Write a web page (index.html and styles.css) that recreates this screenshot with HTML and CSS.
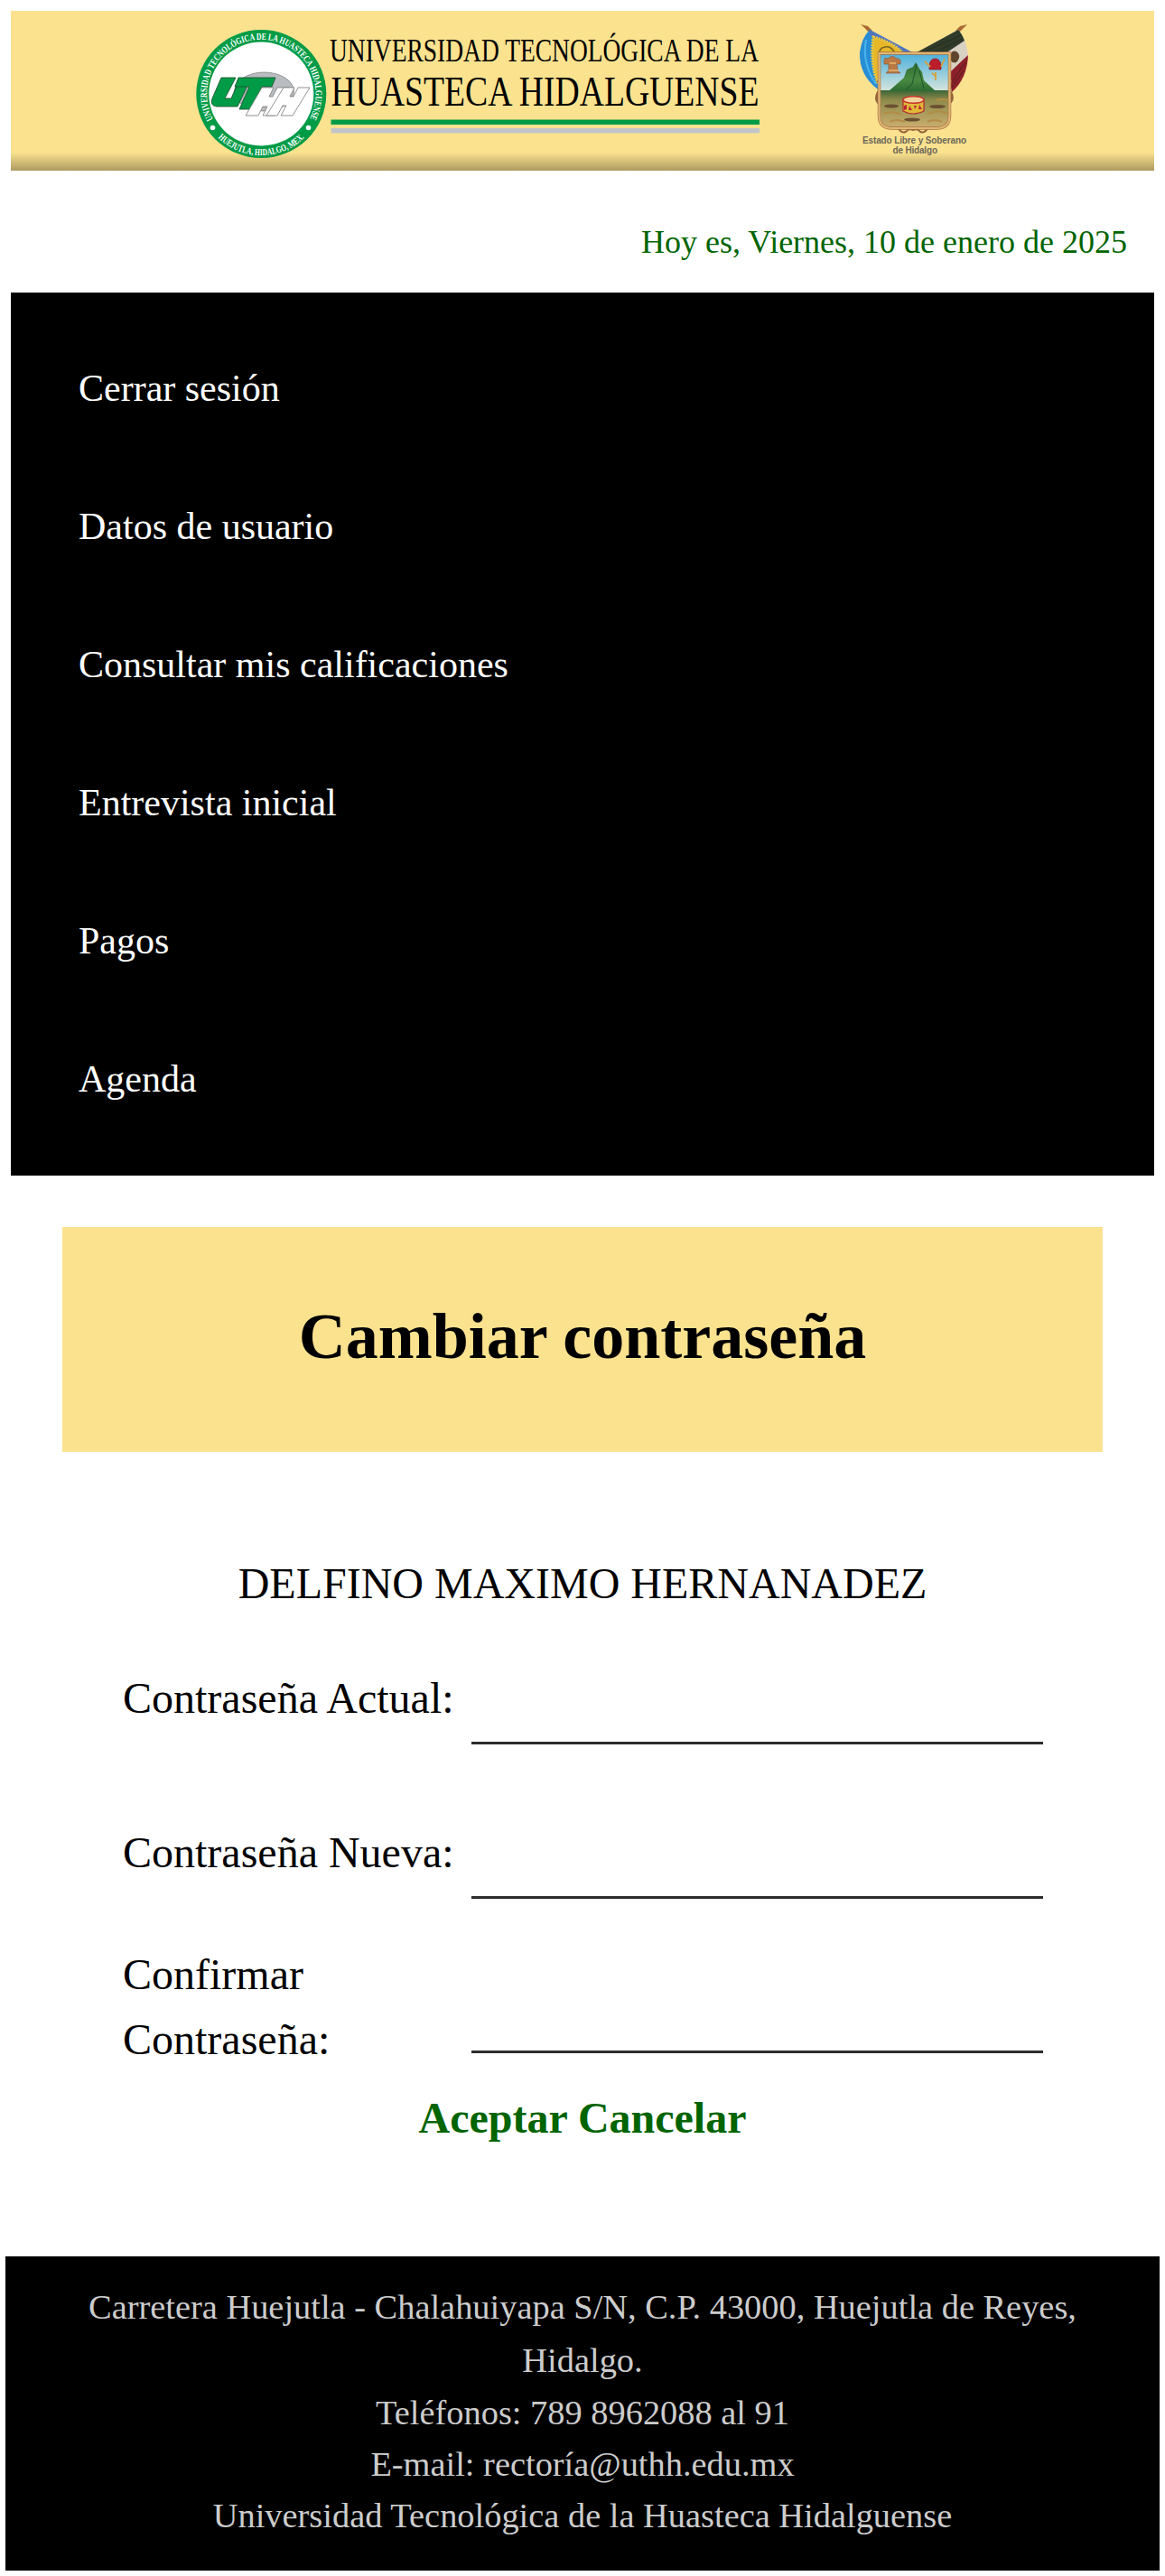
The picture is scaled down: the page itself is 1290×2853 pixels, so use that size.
FILE: index.html
```html
<!DOCTYPE html>
<html lang="es">
<head>
<meta charset="utf-8">
<title>Cambiar contraseña</title>
<link rel="stylesheet" href="styles.css">
</head>
<body>
<header class="banner">
<svg class="banner-art" viewBox="12 12 1266 177" role="img" aria-label="Universidad Tecnológica de la Huasteca Hidalguense">
<defs>
<path id="arc-top" d="M236 132A60.200 60.200 0 1 1 342.600 132"/>
<path id="arc-bottom" d="M240 151A68.200 68.200 0 0 0 338.600 151"/>
<linearGradient id="sky" x2="0" y2="1"><stop stop-color="#4bb0dc"/><stop offset=".5" stop-color="#d4e4dd"/></linearGradient>
<linearGradient id="ground" x2="0" y2="1"><stop stop-color="#3b6537"/><stop offset=".25" stop-color="#8e8a4b"/><stop offset="1" stop-color="#cdb071"/></linearGradient>
<linearGradient id="hill" x2="0" y2="1"><stop stop-color="#2f6b35"/><stop offset=".6" stop-color="#498b42"/><stop offset="1" stop-color="#2d6a31"/></linearGradient>
<clipPath id="shield-clip"><path d="M975 60H1050V128Q1050 141 1036 141H989Q975 141 975 128Z"/></clipPath>
</defs>
<g class="seal">
<ellipse cx="289.300" cy="104" rx="72" ry="71" fill="#009b46"/>
<ellipse cx="289.300" cy="104" rx="58" ry="57.500" fill="#fff"/>
<text class="seal-text"><textPath href="#arc-top" textLength="246" lengthAdjust="spacingAndGlyphs">UNIVERSIDAD TECNOLÓGICA DE LA HUASTECA HIDALGUENSE</textPath></text>
<text class="seal-text"><textPath href="#arc-bottom" startOffset="2" textLength="106" lengthAdjust="spacingAndGlyphs">HUEJUTLA, HIDALGO, MEX.</textPath></text>
<circle cx="235.500" cy="141.500" r="2.800" fill="#fff"/><circle cx="341.500" cy="141.500" r="2.800" fill="#fff"/>
<ellipse cx="292.500" cy="101.500" rx="33" ry="21.500" fill="#b9bcc0" stroke="#777" stroke-width=".7"/>
<g fill="#009b46" stroke="#174c2b" stroke-width=".8" stroke-linejoin="round">
<path d="M261 95H259L251 109H249L250 95Z" fill="#fff" stroke="none"/>
<path d="M245 86H261L249 109H256L262 95H274L263 118H240Q232 117 235 109Z"/>
<path d="M264 86H305L301 96H290L278 121H265L276 96H260Z"/>
</g>
<g fill="#fff" stroke="#777" stroke-width=".8" stroke-linejoin="round">
<path d="M290 97H303L298 107H302L307 97H320L304 128H291L296 118H291L286 128H272Z"/>
<path d="M314 97H326L321 107H325L330 97H343L324 128H311L317 117H313L307 128H295Z"/>
</g>
</g>
<text class="name-small" x="365" y="67.500" textLength="475" lengthAdjust="spacingAndGlyphs">UNIVERSIDAD TECNOLÓGICA DE LA</text>
<text class="name-large" x="366.500" y="117" textLength="474" lengthAdjust="spacingAndGlyphs">HUASTECA HIDALGUENSE</text>
<path d="M366.500 132.500H841V138H366.500Z" fill="#009b46"/>
<path d="M366.500 142H841V147.500H366.500Z" fill="#c4c5c9"/>
<g class="emblem">
<path d="M953 27L961 29L966 34L962 36Q957 30 953 27ZM1071 27L1063 29L1058 34L1062 36Q1067 31 1071 27Z" fill="#a96a32"/>
<path d="M963 33L1012 59L972 99Q951 83 952 58Q954 42 963 33Z" fill="#278ed6"/>
<path d="M963 33L1012 59H1000L963 39Z" fill="#5374be"/>
<path d="M959 44Q954 70 970 93" fill="none" stroke="#4bb5ee" stroke-width="2"/>
<path d="M967 41Q988 46 1000 59H975L972 92Q963 70 967 41Z" fill="#e6b728" stroke="#edc93e" stroke-width="3" stroke-dasharray="2 1"/>
<path d="M974 60Q973 53 980 52Q986 51 990 57" fill="none" stroke="#75621e" stroke-width="1.500"/>
<path d="M1061 33L1012 60L1054 102Q1071 84 1072 62Q1070 42 1061 33Z" fill="#d9d1c3"/>
<path d="M1061 33L1013 59H1047L1068 45Q1065 37 1061 33Z" fill="#303b29"/>
<path d="M1072 61Q1062 70 1050 82L1054 102Q1071 87 1072 61Z" fill="#8d2028"/>
<path d="M1064 39L1022 58M1066 43L1035 58M1069 69L1054 91M1067 78L1054 97" stroke="#172219" stroke-width="1" opacity=".5" fill="none"/>
<path d="M1052 62Q1054 55 1059 57Q1065 61 1060 68Q1056 72 1052 66Z" fill="#60452c"/>
<path d="M972 89Q977 96 972 103Q968 111 975 116M1053 89Q1048 96 1053 103Q1057 111 1049 116" fill="none" stroke="#94633a" stroke-width="3"/>
<path d="M995 142Q998 148 1003 146Q1006 142 1011 144Q1016 142 1019 146Q1024 148 1027 142" fill="none" stroke="#94633a" stroke-width="2"/>
<path d="M973.500 59H1051.500V128Q1051.500 142 1037 142H988Q973.500 142 973.500 128Z" fill="url(#sky)"/>
<g clip-path="url(#shield-clip)">
<path d="M974 100H1051V143H974Z" fill="url(#ground)"/>
<path d="M984 101L1001 86L1004 77L1011 74L1014 69L1018 76L1021 80L1023 89L1036 101Z" fill="url(#hill)"/>
<path d="M1015 71L1010 93L1003 99M1018 78L1023 98" stroke="#1d562b" fill="none" stroke-width="1"/>
<path d="M978 126Q989 122 998 127M1028 126Q1039 121 1049 126M985 135Q992 131 1002 135M1027 135Q1035 131 1043 135M1037 111Q1044 109 1050 111" stroke="#b48c45" stroke-width="2" fill="none"/>
<g fill="#6b5132"><ellipse cx="987" cy="117.500" rx="8" ry="2"/><ellipse cx="1038" cy="118" rx="9" ry="2"/><ellipse cx="1010" cy="132.500" rx="9" ry="2"/></g>
</g>
<path d="M973.500 59H1051.500V128Q1051.500 142 1037 142H988Q973.500 142 973.500 128Z" fill="none" stroke="#a9713f" stroke-width="3.500"/>
<path d="M973.500 59H1051.500V128Q1051.500 142 1037 142H988Q973.500 142 973.500 128Z" fill="none" stroke="#dfb675" stroke-width="2.200"/>
<path d="M979 67Q979 63 983 65Q988 60 993 65Q998 64 997 71H993L994 78L997 81H981L984 78V71H979Z" fill="#b97846" stroke="#8f5638" stroke-width=".7"/>
<path d="M985 70H992M984 78H995" stroke="#e8b66f" stroke-width="1.500"/>
<path d="M1029 74Q1029 64 1037 65Q1043 67 1042 77H1029Z" fill="#bb1e2b" stroke="#831c25" stroke-width=".7"/>
<path d="M1024 68L1030 74M1046 65L1042 74M1036 80V89M1032 81L1037 85" stroke="#d4a340" stroke-width="1.800"/>
<path d="M1000 110V123Q1011 129 1023 123V110Z" fill="#e1b939" stroke="#af292c" stroke-width="1.200"/>
<path d="M1001 117L1004 116V121L1001 122ZM1007 117L1010 122H1006ZM1012 117H1015L1013 121ZM1018 116L1021 121H1017Z" fill="#b92632"/>
<ellipse cx="1011.500" cy="110.500" rx="11.500" ry="3.800" fill="#f3d49b" stroke="#c93830" stroke-width="1.500"/>
</g>
<text class="emblem-text" x="955" y="158.500" textLength="115">Estado Libre y Soberano</text>
<text class="emblem-text" x="988.500" y="170" textLength="49.500">de Hidalgo</text>
</svg>
</header>
<p class="date">Hoy es, Viernes, 10 de enero de 2025</p>
<nav class="menu">
<a>Cerrar sesión</a>
<a>Datos de usuario</a>
<a>Consultar mis calificaciones</a>
<a>Entrevista inicial</a>
<a>Pagos</a>
<a>Agenda</a>
</nav>
<main class="content">
<h1 class="title">Cambiar contraseña</h1>
<p class="student">DELFINO MAXIMO HERNANADEZ</p>
<form class="form">
<label class="row"><span class="label">Contraseña Actual:</span><input class="field" type="password"></label>
<label class="row"><span class="label">Contraseña Nueva:</span><input class="field" type="password"></label>
<label class="row"><span class="label">Confirmar Contraseña:</span><input class="field" type="password"></label>
</form>
<p class="actions"><a>Aceptar</a> <a>Cancelar</a></p>
</main>
<footer class="footer">
<p class="address">Carretera Huejutla - Chalahuiyapa S/N, C.P. 43000, Huejutla de Reyes, Hidalgo.</p>
<p>Teléfonos: 789 8962088 al 91</p>
<p>E-mail: rectoría@uthh.edu.mx</p>
<p>Universidad Tecnológica de la Huasteca Hidalguense</p>
</footer>
</body>
</html>
```
FILE: styles.css
```css
* { box-sizing: border-box; }
body {
  margin: 0;
  padding: 12px 6px 6px;
  font-family: "Liberation Serif", "Times New Roman", serif;
  color: #000;
  background: #fff;
}
p, h1 { margin: 0; }
.banner {
  height: 177px;
  margin: 0 6px;
  background: linear-gradient(to bottom, transparent 157px, #ad9a60 177px), #fbe28f;
}
.banner-art { display: block; width: 1266px; height: 177px; }
.seal-text { font: bold 10.5px "Liberation Serif", serif; fill: #fff; }
.name-small { font: 35px "Liberation Serif", serif; }
.name-large { font: 45.5px "Liberation Serif", serif; }
.emblem-text { font: bold 10px "Liberation Sans", Arial, sans-serif; fill: #6b6758; }
.date {
  height: 135px;
  padding: 59px 36px 0 0;
  font-size: 36px;
  line-height: 41px;
  text-align: right;
  color: #006400;
}
.menu {
  display: flex;
  flex-direction: column;
  height: 978px;
  margin: 0 6px;
  padding: 30px 75px 0;
  background: #000;
}
.menu a {
  height: 153px;
  font-size: 42px;
  line-height: 153px;
  color: #fff;
}
.content { padding: 57px 63px 0; height: 1197px; }
.title {
  height: 249px;
  padding-top: 80px;
  font-size: 72px;
  line-height: 82px;
  text-align: center;
  background: #fbe28f;
}
.student {
  margin-top: 110px;
  font-size: 48px;
  line-height: 72px;
  text-align: center;
}
.form {
  display: grid;
  grid-template-rows: repeat(3, 171px);
  padding: 0 60px 0 67px;
  margin-top: 5px;
}
.row {
  display: flex;
  align-items: center;
  gap: 14px;
}
.label {
  flex: 0 0 372px;
  font-size: 48px;
  line-height: 72px;
}
.field {
  flex: 0 0 633px;
  height: 102px;
  border: 0;
  border-bottom: 3px solid #2d2d2d;
  background: none;
  outline: 0;
}
.actions {
  margin-top: 2px;
  font-size: 48px;
  font-weight: bold;
  line-height: 72px;
  text-align: center;
  color: #006400;
}
.footer {
  height: 348px;
  padding: 27px 60px 0;
  font-size: 38.4px;
  line-height: 57px;
  text-align: center;
  color: #ccc;
  background: #000;
}
.address { line-height: 59px; }
```
